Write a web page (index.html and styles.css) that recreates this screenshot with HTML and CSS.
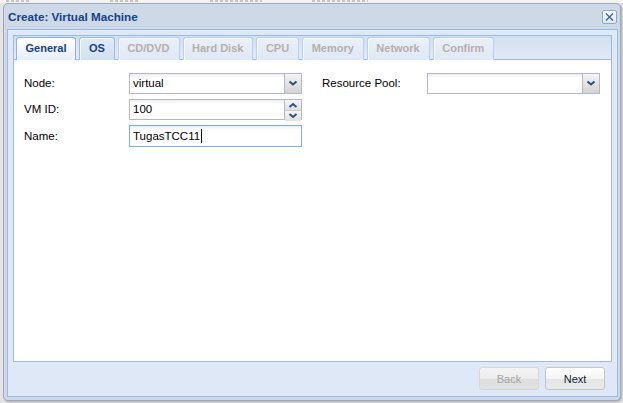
FILE: index.html
```html
<!DOCTYPE html>
<html>
<head>
<meta charset="utf-8">
<title>Create: Virtual Machine</title>
<link rel="stylesheet" href="styles.css">
</head>
<body>
<div class="desk">
  <div class="desk-row">
    <span class="cell c1"></span>
    <span class="cell c2"></span>
    <span class="cell c3"></span>
    <span class="cell c4"></span>
  </div>
</div>

<div class="window">
  <div class="win-header">
    <span class="win-title">Create: Virtual Machine</span>
    <button class="win-close" type="button" aria-label="Close">
      <svg width="13" height="12" viewBox="0 0 13 12"><path d="M3 2.5 L10 9.5 M10 2.5 L3 9.5" stroke="#3b5f97" stroke-width="1.3" fill="none"/></svg>
    </button>
  </div>

  <div class="win-frame">
    <div class="tabpanel">
      <div class="tabstrip">
        <div class="tab active">General</div>
        <div class="tab">OS</div>
        <div class="tab disabled">CD/DVD</div>
        <div class="tab disabled">Hard Disk</div>
        <div class="tab disabled">CPU</div>
        <div class="tab disabled">Memory</div>
        <div class="tab disabled">Network</div>
        <div class="tab disabled">Confirm</div>
      </div>
      <div class="tabbody">
        <div class="form">
          <div class="col">
            <div class="row">
              <label class="lbl">Node:</label>
              <div class="field">
                <span class="value">virtual</span>
                <span class="trigger">
                  <svg width="16" height="20" viewBox="0 0 16 20"><path d="M4.5 8.5 L8 11.5 L11.5 8.5" stroke="#2d4f85" stroke-width="2" fill="none"/></svg>
                </span>
              </div>
            </div>
            <div class="row">
              <label class="lbl">VM ID:</label>
              <div class="field">
                <span class="value">100</span>
                <span class="spinner">
                  <span class="spin-half">
                    <svg width="16" height="10" viewBox="0 0 16 10"><path d="M4.5 7 L8 4 L11.5 7" stroke="#2d4f85" stroke-width="2" fill="none"/></svg>
                  </span>
                  <span class="spin-half">
                    <svg width="16" height="10" viewBox="0 0 16 10"><path d="M4.5 3 L8 6 L11.5 3" stroke="#2d4f85" stroke-width="2" fill="none"/></svg>
                  </span>
                </span>
              </div>
            </div>
            <div class="row">
              <label class="lbl">Name:</label>
              <div class="field focus">
                <span class="value">TugasTCC11</span><span class="caret"></span>
              </div>
            </div>
          </div>
          <div class="col">
            <div class="row">
              <label class="lbl">Resource Pool:</label>
              <div class="field">
                <span class="value"></span>
                <span class="trigger">
                  <svg width="16" height="20" viewBox="0 0 16 20"><path d="M4.5 8.5 L8 11.5 L11.5 8.5" stroke="#2d4f85" stroke-width="2" fill="none"/></svg>
                </span>
              </div>
            </div>
          </div>
        </div>
      </div>
    </div>
    <div class="footer">
      <button class="btn disabled" type="button">Back</button>
      <button class="btn" type="button">Next</button>
    </div>
  </div>
</div>
</body>
</html>
```

FILE: styles.css
```css
* { box-sizing: border-box; }

body {
  margin: 0;
  width: 623px;
  height: 403px;
  overflow: hidden;
  position: relative;
  background: #e4e4e4;
  font-family: "Liberation Sans", Arial, sans-serif;
}

.desk-row {
  display: flex;
  height: 3px;
  background: #f4f4f4;
}
.desk-row .cell {
  height: 2px;
  background: repeating-linear-gradient(90deg, #a6a6a6 0 3px, transparent 3px 5px);
  opacity: 0.6;
}
.desk-row .c1 { margin-left: 6px; width: 24px; margin-right: 80px; }
.desk-row .c2 { width: 30px; margin-right: 70px; }
.desk-row .c3 { width: 52px; margin-right: 50px; }
.desk-row .c4 { width: 56px; }

.window {
  position: absolute;
  left: 3px;
  top: 3px;
  width: 618px;
  height: 398px;
  border: 1px solid #9dabbd;
  border-radius: 5px;
  background: #ced9e7;
  padding: 0 2px 3px 3px;
  display: flex;
  flex-direction: column;
  box-shadow: 1px 1px 2px rgba(0, 0, 0, 0.25);
}

.win-header {
  height: 25px;
  flex: none;
  display: flex;
  align-items: center;
  justify-content: space-between;
  padding: 0 1px 0 1px;
}

.win-title {
  font-size: 11.7px;
  font-weight: bold;
  color: #15428b;
}

.win-close {
  width: 15px;
  height: 14px;
  padding: 0;
  margin: 0;
  border: 1px solid #8fa9ce;
  border-radius: 2px;
  background: linear-gradient(#ffffff, #dae4f2);
  display: flex;
  align-items: center;
  justify-content: center;
}

.win-frame {
  flex: 1;
  display: flex;
  flex-direction: column;
  border: 1px solid #99bbe8;
  background: #dfe8f6;
  padding: 5px 5px 0 5px;
}

.tabpanel {
  flex: 1;
  display: flex;
  flex-direction: column;
}

.tabstrip {
  height: 25px;
  flex: none;
  display: flex;
  align-items: flex-end;
  gap: 3px;
  padding: 1px 0 0 2px;
  border: 1px solid #99bbe8;
  background: linear-gradient(#d2dfef, #e2eaf6);
}

.tab {
  height: 23px;
  padding: 0 9px 2px 8.5px;
  margin-bottom: -1px;
  display: flex;
  align-items: center;
  border: 1px solid #99bbe8;
  border-bottom: none;
  border-radius: 3px 3px 0 0;
  font-size: 11px;
  font-weight: bold;
  color: #15428b;
  background: linear-gradient(#e0eaf7, #d2e0f2);
  box-shadow: inset 1px 1px 0 rgba(255, 255, 255, 0.7);
}

.tab.active {
  background: linear-gradient(#ffffff, #e6eef9);
  border-color: #8db2e3;
}

.tab.disabled {
  color: #b8aeae;
  border-color: #b9cfea;
  background: linear-gradient(#eaf0f8, #dfe8f5);
}

.tabbody {
  flex: 1;
  background: #ffffff;
  border: 1px solid #99bbe8;
  border-top: none;
  padding: 12px 10px;
}

.form {
  display: flex;
  gap: 20px;
}

.col {
  display: flex;
  flex-direction: column;
  gap: 4px;
}

.row {
  display: flex;
  align-items: center;
  height: 22px;
}

.row:nth-child(3) { margin-top: 1px; }

.lbl {
  width: 105px;
  font-size: 11.5px;
  color: #000;
}

.field {
  width: 173px;
  height: 21px;
  display: flex;
  align-items: center;
  border: 1px solid #b5b8c8;
  background: linear-gradient(#ededed, #ffffff 4px);
  font-size: 11.5px;
  color: #000;
}

.field.focus {
  border-color: #7eadd9;
  height: 22px;
}

.value {
  flex: 1;
  padding-left: 3px;
  white-space: nowrap;
}

.field.focus .value { flex: none; }

.caret {
  width: 1px;
  height: 14px;
  margin-left: 1px;
  background: #000;
}

.trigger {
  width: 17px;
  height: 100%;
  display: flex;
  align-items: center;
  justify-content: center;
  border-left: 1px solid #b5b8c8;
  background: linear-gradient(#f4f4f4, #e2e2e2 55%, #d2d2d2);
}

.spinner {
  width: 17px;
  height: 100%;
  display: flex;
  flex-direction: column;
  border-left: 1px solid #b5b8c8;
}

.spin-half {
  flex: 1;
  display: flex;
  align-items: center;
  justify-content: center;
  background: linear-gradient(#f6f6f6, #e0e0e0);
}

.spin-half + .spin-half { border-top: 1px solid #c8cad4; }

.footer {
  height: 34px;
  flex: none;
  display: flex;
  justify-content: flex-end;
  align-items: flex-start;
  gap: 6px;
  padding: 5px 7px 0 0;
}

.btn {
  width: 60px;
  height: 23px;
  margin: 0;
  padding: 0;
  border: 1px solid #c4c4c4;
  border-radius: 3px;
  background: linear-gradient(#ffffff, #f4f4f4 50%, #e6e6e6 50%, #e8e8e8);
  font-family: "Liberation Sans", Arial, sans-serif;
  font-size: 11px;
  color: #101c33;
}

.btn.disabled {
  color: #a3a3a3;
  border-color: #d6d6d6;
  background: linear-gradient(#f3f3f3, #ececec 50%, #dedede 50%, #e2e2e2);
}
```
